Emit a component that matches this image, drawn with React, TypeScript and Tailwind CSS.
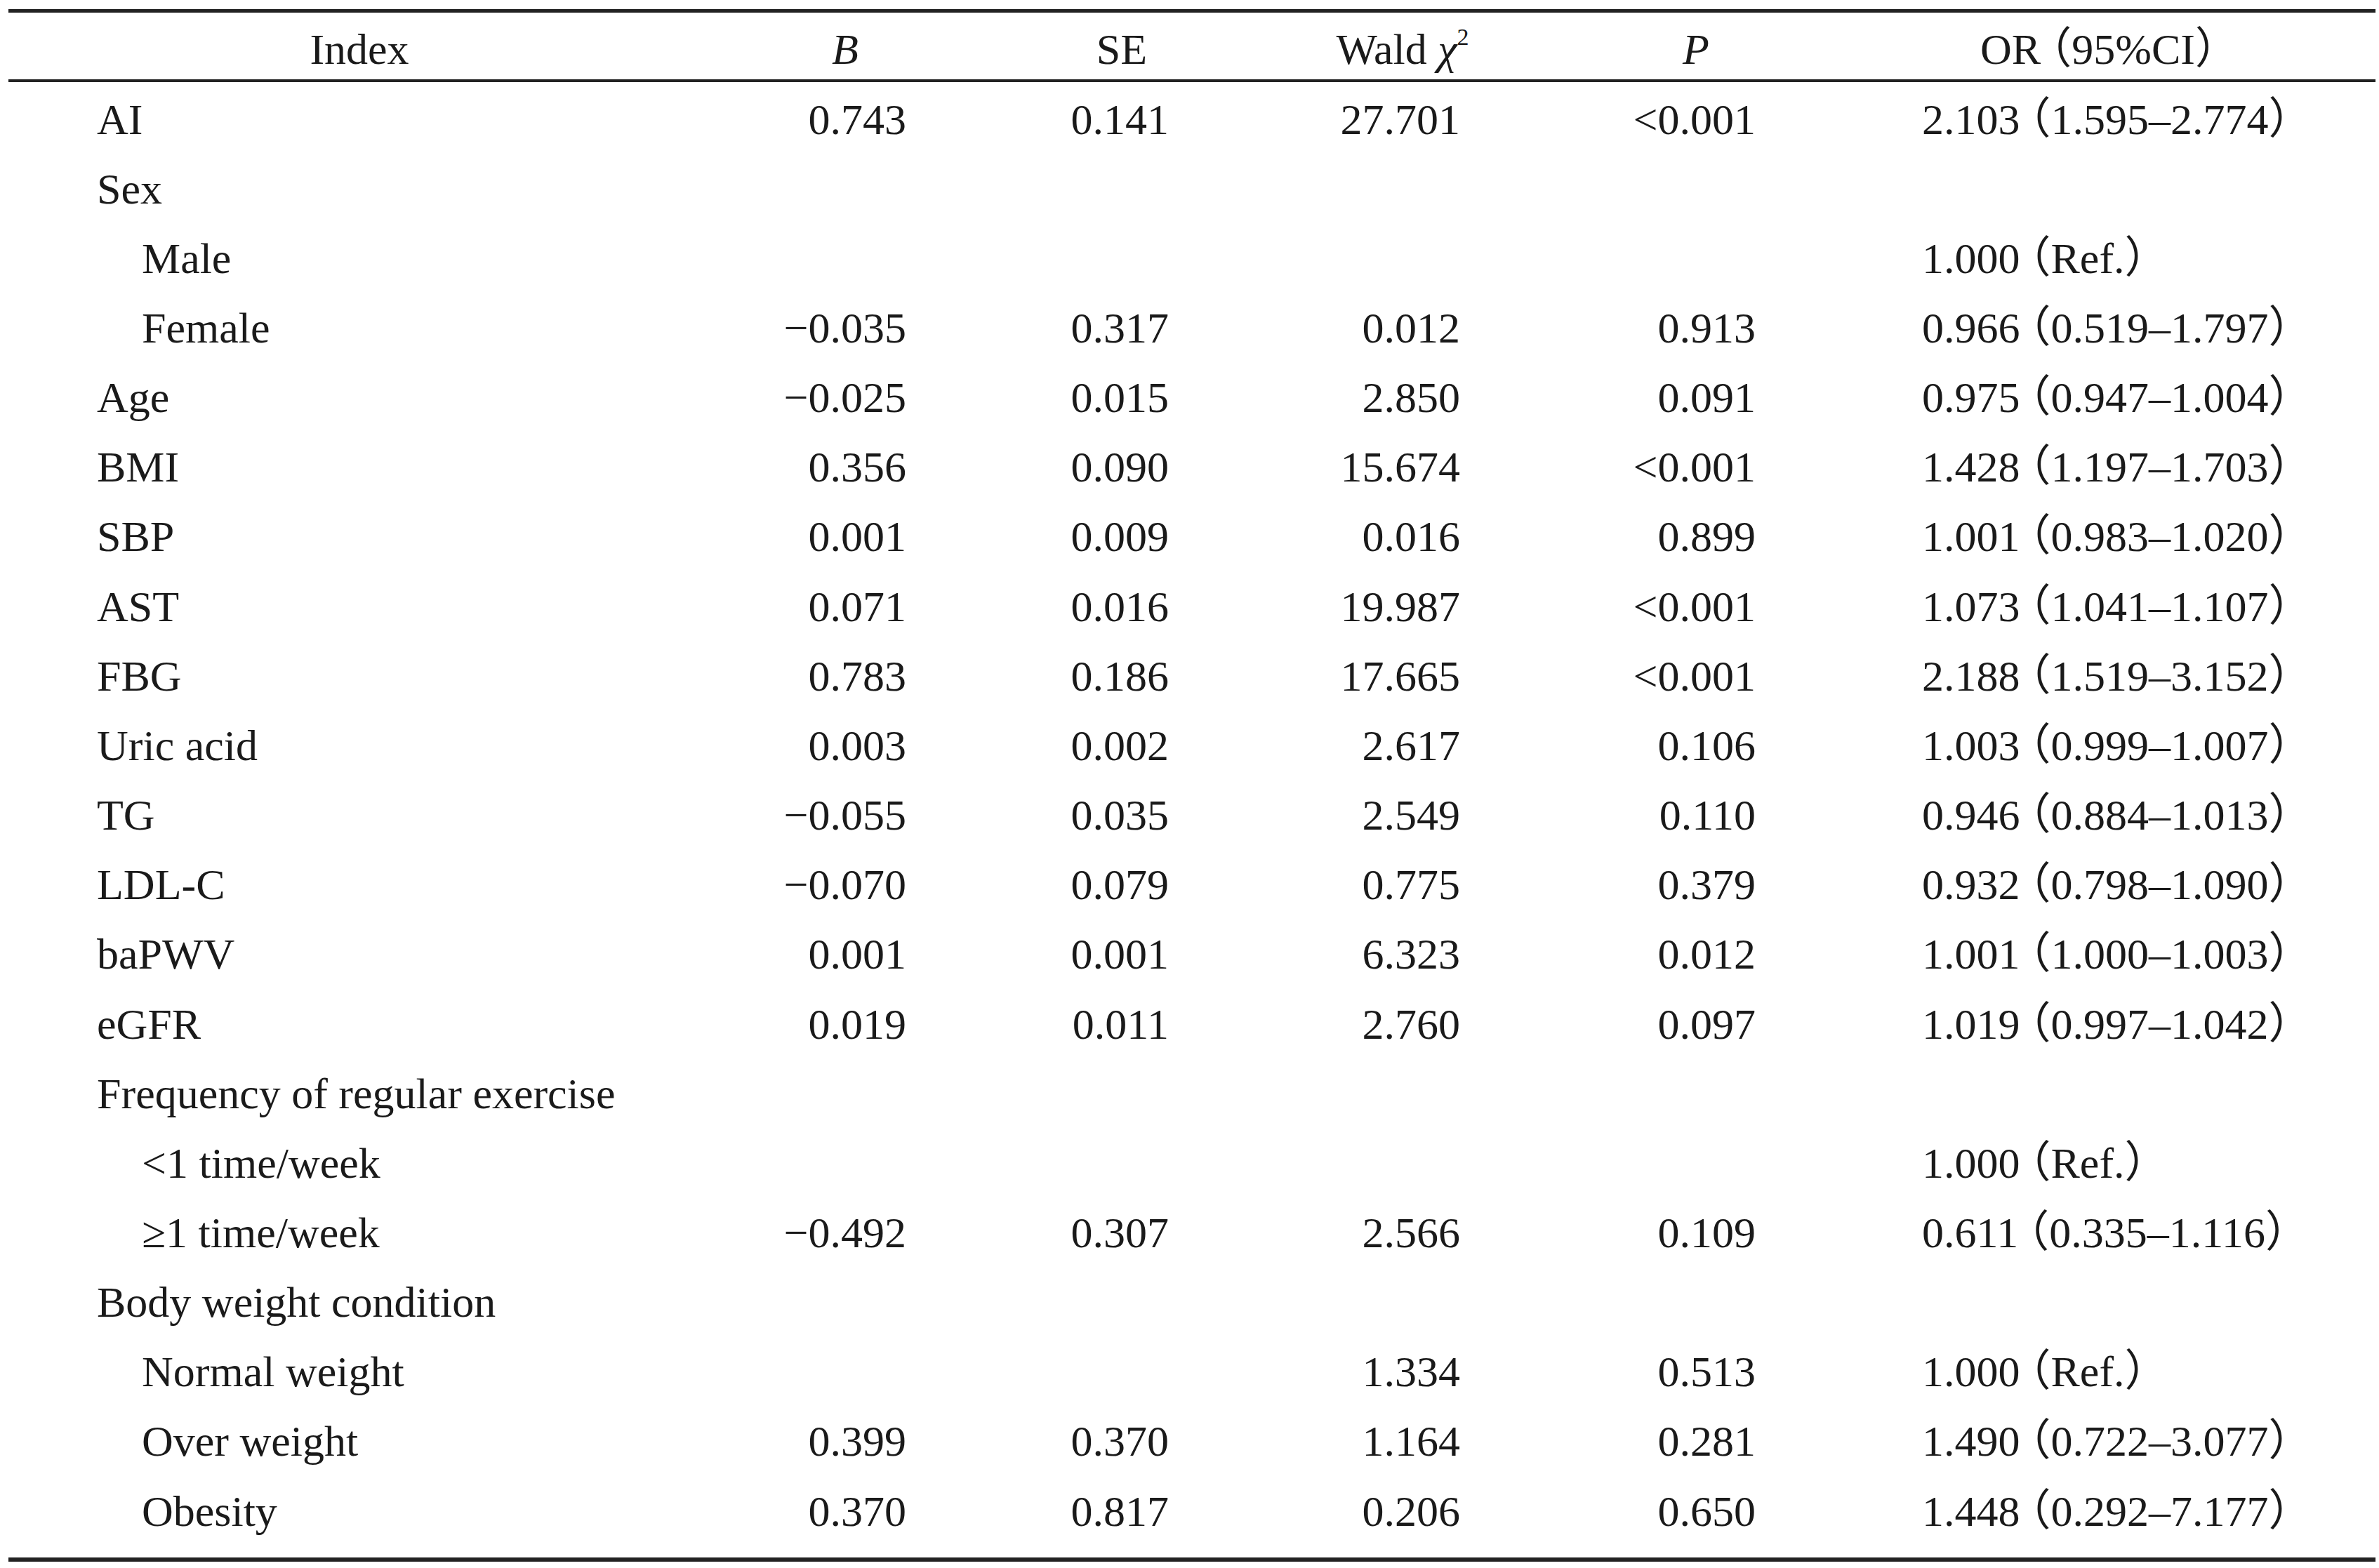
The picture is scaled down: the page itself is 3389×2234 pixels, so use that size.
const rows = [
  { label: "AI", b: "0.743", se: "0.141", wald: "27.701", p: "<0.001", or: ["2.103", "1.595–2.774"] },
  { label: "Sex" },
  { label: "Male", sub: true, or: ["1.000", "Ref."] },
  { label: "Female", sub: true, b: "−0.035", se: "0.317", wald: "0.012", p: "0.913", or: ["0.966", "0.519–1.797"] },
  { label: "Age", b: "−0.025", se: "0.015", wald: "2.850", p: "0.091", or: ["0.975", "0.947–1.004"] },
  { label: "BMI", b: "0.356", se: "0.090", wald: "15.674", p: "<0.001", or: ["1.428", "1.197–1.703"] },
  { label: "SBP", b: "0.001", se: "0.009", wald: "0.016", p: "0.899", or: ["1.001", "0.983–1.020"] },
  { label: "AST", b: "0.071", se: "0.016", wald: "19.987", p: "<0.001", or: ["1.073", "1.041–1.107"] },
  { label: "FBG", b: "0.783", se: "0.186", wald: "17.665", p: "<0.001", or: ["2.188", "1.519–3.152"] },
  { label: "Uric acid", b: "0.003", se: "0.002", wald: "2.617", p: "0.106", or: ["1.003", "0.999–1.007"] },
  { label: "TG", b: "−0.055", se: "0.035", wald: "2.549", p: "0.110", or: ["0.946", "0.884–1.013"] },
  { label: "LDL-C", b: "−0.070", se: "0.079", wald: "0.775", p: "0.379", or: ["0.932", "0.798–1.090"] },
  { label: "baPWV", b: "0.001", se: "0.001", wald: "6.323", p: "0.012", or: ["1.001", "1.000–1.003"] },
  { label: "eGFR", b: "0.019", se: "0.011", wald: "2.760", p: "0.097", or: ["1.019", "0.997–1.042"] },
  { label: "Frequency of regular exercise" },
  { label: "<1 time/week", sub: true, or: ["1.000", "Ref."] },
  { label: "≥1 time/week", sub: true, b: "−0.492", se: "0.307", wald: "2.566", p: "0.109", or: ["0.611", "0.335–1.116"] },
  { label: "Body weight condition" },
  { label: "Normal weight", sub: true, wald: "1.334", p: "0.513", or: ["1.000", "Ref."] },
  { label: "Over weight", sub: true, b: "0.399", se: "0.370", wald: "1.164", p: "0.281", or: ["1.490", "0.722–3.077"] },
  { label: "Obesity", sub: true, b: "0.370", se: "0.817", wald: "0.206", p: "0.650", or: ["1.448", "0.292–7.177"] },
];

// full-width parens, set half-width so they sit tight like the print layout
const Open = () => <span className="ml-[13px] [font-feature-settings:'halt']">（</span>;
const Close = () => <span className="mr-[13px] [font-feature-settings:'halt']">）</span>;

const OddsRatio = ({ value }: { value?: string[] }) => {
  if (!value) return null;
  return (
    <>
      {value[0]}
      <Open />
      {value[1]}
      <Close />
    </>
  );
};

export default function App() {
  return (
    <div className="min-h-screen bg-white pt-[13px] pl-[12px] font-['Liberation_Serif','Noto_Sans_CJK_SC',serif] text-[62px] text-[#1a1a1a]">
      <div className="w-[3372px] border-t-[5px] border-b-[6px] border-[#222]">
        {/* Header */}
        <div className="grid grid-cols-[1000px_384px_404px_396px_440px_748px] border-b-[4px] border-[#222] pt-[9px] leading-[86px] whitespace-nowrap">
          <div className="text-center">Index</div>
          <div className="text-center italic">B</div>
          <div className="text-center">SE</div>
          <div className="text-center">
            Wald <i>χ</i>
            <sup className="text-[34px] top-[-27px]">2</sup>
          </div>
          <div className="text-center italic">P</div>
          <div className="text-center pr-[28px]">
            OR<Open />95%CI<Close />
          </div>
        </div>

        {/* Body */}
        <div className="pt-[3.5px] pb-[16px] leading-[99.15px] whitespace-nowrap">
          {rows.map((r, i) => (
            <div key={i} className="grid grid-cols-[1000px_384px_404px_396px_440px_748px]">
              <div className={r.sub ? "pl-[190px]" : "pl-[126px]"}>{r.label}</div>
              <div className="text-right pr-[105px]">{r.b}</div>
              <div className="text-right pr-[135px]">{r.se}</div>
              <div className="text-right pr-[116px]">{r.wald}</div>
              <div className="text-right pr-[135px]">{r.p}</div>
              <div className="pl-[102px]">
                <OddsRatio value={r.or} />
              </div>
            </div>
          ))}
        </div>
      </div>
    </div>
  );
}
